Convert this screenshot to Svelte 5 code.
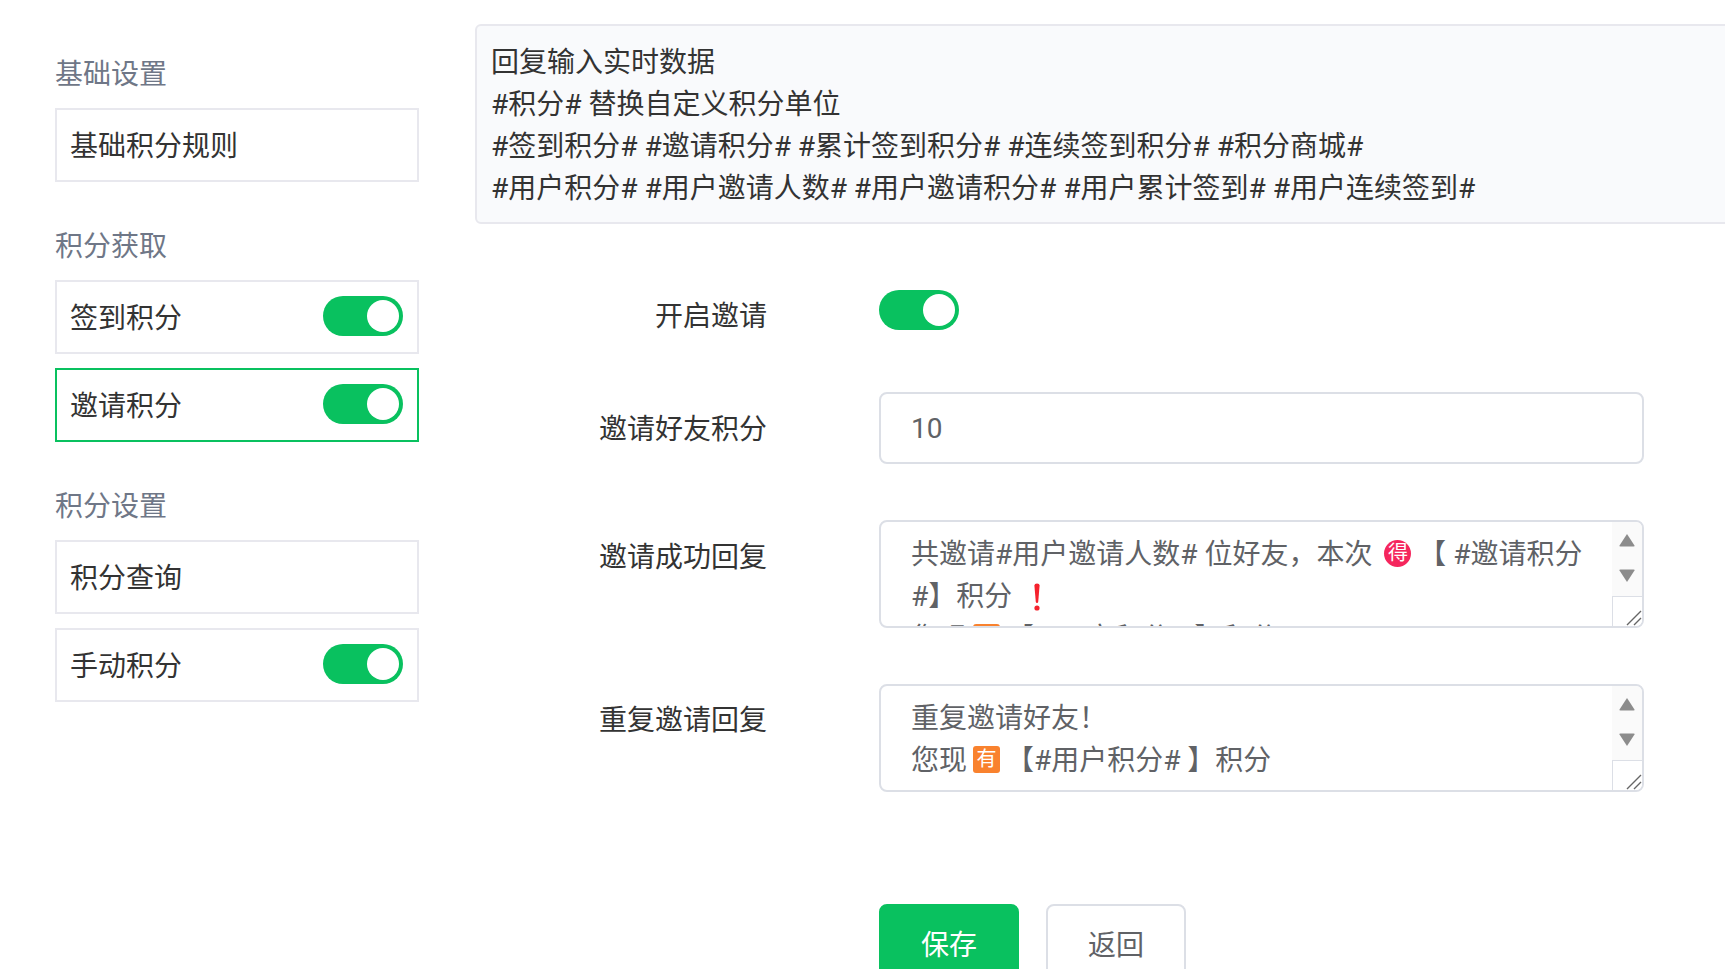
<script lang="ts">
  const groups = [
    { title: "基础设置", items: [{ label: "基础积分规则", toggle: false }] },
    {
      title: "积分获取",
      items: [
        { label: "签到积分", toggle: true },
        { label: "邀请积分", toggle: true, active: true },
      ],
    },
    {
      title: "积分设置",
      items: [
        { label: "积分查询", toggle: false },
        { label: "手动积分", toggle: true },
      ],
    },
  ];

  const hints = [
    "回复输入实时数据",
    "#积分# 替换自定义积分单位",
    "#签到积分# #邀请积分# #累计签到积分# #连续签到积分# #积分商城#",
    "#用户积分# #用户邀请人数# #用户邀请积分# #用户累计签到# #用户连续签到#",
  ];
</script>

{#snippet scrollbar()}
  <div class="scrollbar">
    <svg class="arrow" width="18" height="14" viewBox="0 0 18 14"><path d="M9 1 L16.5 12.5 Q17 13.5 15.5 13.5 H2.5 Q1 13.5 1.5 12.5 Z" fill="#8c8c8c" /></svg>
    <svg class="arrow down" width="18" height="14" viewBox="0 0 18 14"><path d="M9 13 L16.5 1.5 Q17 .5 15.5 .5 H2.5 Q1 .5 1.5 1.5 Z" fill="#8c8c8c" /></svg>
    <div class="resizer">
      <svg width="16" height="16" viewBox="0 0 16 16"><path d="M1 15 L15 1 M8 15 L15 8" stroke="#666" stroke-width="1.4" fill="none" /></svg>
    </div>
  </div>
{/snippet}

<div class="page">
  <aside class="sidebar">
    {#each groups as group}
      <h3>{group.title}</h3>
      <ul>
        {#each group.items as item}
          <li class:active={item.active}>
            <span class="item-label">{item.label}</span>
            {#if item.toggle}
              <span class="switch"><i></i></span>
            {/if}
          </li>
        {/each}
      </ul>
    {/each}
  </aside>

  <main>
    <div class="hints">
      {#each hints as line}
        <div>{line}</div>
      {/each}
    </div>

    <div class="row row-switch">
      <label for="invite-on">开启邀请</label>
      <span class="switch" id="invite-on"><i></i></span>
    </div>

    <div class="row row-input">
      <label for="points">邀请好友积分</label>
      <input id="points" value="10" />
    </div>

    <div class="row row-area">
      <span class="label">邀请成功回复</span>
      <div class="area">
        <div class="area-text">
          共邀请#用户邀请人数# 位好友，本次 <b class="emoji red">得</b> 【 #邀请积分#】积分
          <svg class="mark" width="10" height="28" viewBox="0 0 10 28"><path d="M2.4 2.5 Q2.4 .5 5 .5 Q7.6 .5 7.6 2.5 L6.2 19 Q6 20 5 20 Q4 20 3.8 19 Z" fill="#f5222d" /><circle cx="5" cy="25" r="2.6" fill="#f5222d" /></svg><br />
          您现 <b class="emoji orange">有</b> 【 #用户积分# 】积分
        </div>
        {@render scrollbar()}
      </div>
    </div>

    <div class="row row-area last">
      <span class="label">重复邀请回复</span>
      <div class="area">
        <div class="area-text">
          重复邀请好友！<br />
          您现 <b class="emoji orange">有</b> 【#用户积分# 】积分
        </div>
        {@render scrollbar()}
      </div>
    </div>

    <div class="actions">
      <button class="primary">保存</button>
      <button>返回</button>
    </div>
  </main>
</div>

<style>
  :global(body) {
    margin: 0;
    background: #fff;
    overflow: hidden;
  }

  .page {
    display: flex;
    width: 1725px;
    height: 969px;
    overflow: hidden;
    font-family: Roboto, "Noto Sans CJK SC", sans-serif;
    font-size: 28px;
    line-height: 42px;
    color: #333;
  }

  .sidebar {
    flex: 0 0 364px;
    margin-left: 55px;
    padding-top: 54px;
  }

  h3 {
    margin: 0 0 12px;
    font-size: 28px;
    font-weight: 400;
    line-height: 42px;
    color: #6f7787;
  }

  ul {
    display: flex;
    flex-direction: column;
    gap: 14px;
    margin: 0 0 44px;
    padding: 0;
    list-style: none;
  }

  li {
    display: flex;
    align-items: center;
    justify-content: space-between;
    box-sizing: border-box;
    height: 74px;
    padding: 0 14px 0 13px;
    border: 2px solid #e8e8ee;
  }

  li.active {
    border-color: #09c15f;
  }

  .item-label {
    padding-top: 4px;
  }

  li .switch {
    margin-top: -2px;
  }

  .switch {
    display: block;
    flex: none;
    width: 80px;
    height: 40px;
    padding: 4px;
    box-sizing: border-box;
    border-radius: 20px;
    background: #09c15f;
  }

  .switch i {
    display: block;
    width: 32px;
    height: 32px;
    margin-left: 40px;
    border-radius: 50%;
    background: #fff;
  }

  main {
    flex: none;
    width: 1300px;
    margin-left: 56px;
    padding-top: 24px;
  }

  .hints {
    box-sizing: border-box;
    height: 200px;
    margin-bottom: 67px;
    padding: 16px 14px 14px;
    border: 2px solid #e8e8ee;
    border-radius: 6px;
    background: #f9fafc;
  }

  .row {
    display: grid;
    grid-template-columns: 292px 765px;
    column-gap: 112px;
    align-items: start;
    color: #333;
  }

  .row label,
  .row .label {
    text-align: right;
    padding-top: 17px;
  }

  .row-area.last .label {
    padding-top: 16px;
  }

  .row-switch {
    margin-top: -1px;
    margin-bottom: 54px;
  }

  .row-switch label {
    padding-top: 6px;
  }

  .row-input {
    margin-bottom: 56px;
  }

  .row-input input {
    box-sizing: border-box;
    width: 100%;
    height: 72px;
    padding: 0 30px;
    border: 2px solid #dcdfe6;
    border-radius: 8px;
    font: inherit;
    color: #606266;
    outline: none;
  }

  .row-area {
    margin-bottom: 56px;
  }

  .row-area.last {
    margin-bottom: 112px;
  }

  .area {
    position: relative;
    box-sizing: border-box;
    height: 108px;
    padding: 12px 30px 0;
    border: 2px solid #dcdfe6;
    border-radius: 8px;
    overflow: hidden;
    color: #606266;
  }

  .area-text {
    width: 672px;
  }

  .emoji {
    display: inline-flex;
    align-items: center;
    justify-content: center;
    vertical-align: 4px;
    width: 27px;
    height: 27px;
    margin-top: -4px;
    font-size: 20px;
    font-weight: 400;
    line-height: 1;
    color: #fff;
  }

  .emoji.red {
    margin-left: 5px;
    border-radius: 50%;
    background: #f5265d;
  }

  .emoji.orange {
    margin-left: -1px;
    margin-right: -1px;
    border-radius: 3px;
    background: #f9822e;
  }

  .mark {
    margin-left: 13px;
    vertical-align: -5px;
  }

  .scrollbar {
    position: absolute;
    top: 0;
    right: 0;
    bottom: 0;
    display: flex;
    flex-direction: column;
    align-items: center;
    width: 30px;
    background: #fafafa;
  }

  .arrow {
    margin-top: 11px;
  }

  .arrow.down {
    margin-top: 22px;
  }

  .resizer {
    position: absolute;
    right: 0;
    bottom: 0;
    display: flex;
    align-items: flex-end;
    justify-content: flex-end;
    box-sizing: border-box;
    width: 30px;
    height: 30px;
    border-top: 1px solid #dcdfe6;
    border-left: 1px solid #dcdfe6;
    background: #fff;
  }

  .actions {
    display: flex;
    gap: 27px;
    margin-left: 404px;
  }

  button {
    box-sizing: border-box;
    width: 140px;
    height: 84px;
    border: 2px solid #dcdfe6;
    border-radius: 8px;
    background: #fff;
    font: inherit;
    color: #606266;
  }

  button.primary {
    border-color: #09c15f;
    background: #09c15f;
    color: #fff;
  }
</style>
